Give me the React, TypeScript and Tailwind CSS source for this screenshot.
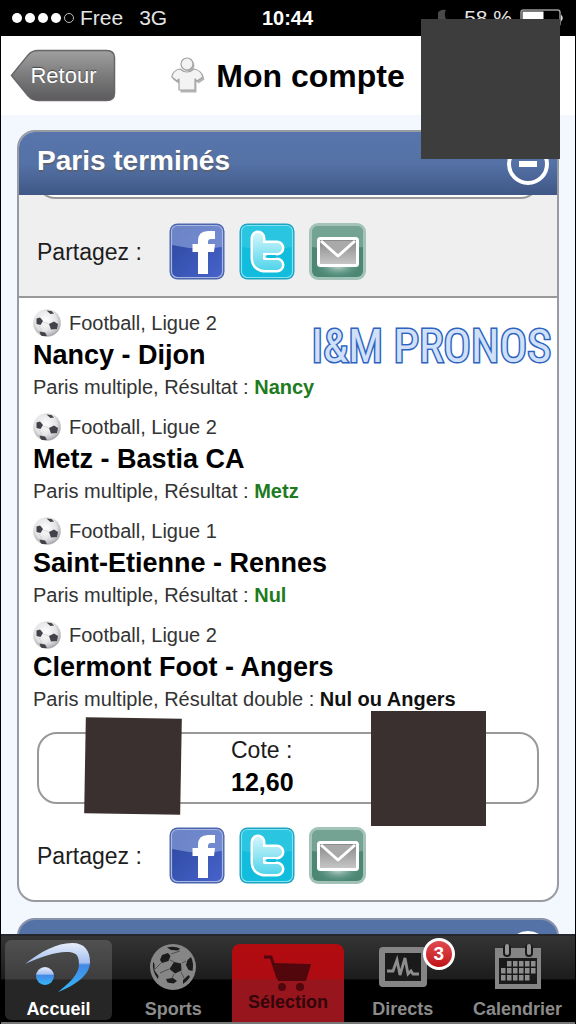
import type { ReactNode } from "react";

type Bet = { league: string; match: string; label: string; result: string; won: boolean };

const bets: Bet[] = [
  { league: "Football, Ligue 2", match: "Nancy - Dijon", label: "Paris multiple, Résultat :", result: "Nancy", won: true },
  { league: "Football, Ligue 2", match: "Metz - Bastia CA", label: "Paris multiple, Résultat :", result: "Metz", won: true },
  { league: "Football, Ligue 1", match: "Saint-Etienne - Rennes", label: "Paris multiple, Résultat :", result: "Nul", won: true },
  { league: "Football, Ligue 2", match: "Clermont Foot - Angers", label: "Paris multiple, Résultat double :", result: "Nul ou Angers", won: false },
];

function StatusBar() {
  return (
    <div className="grid h-9 shrink-0 grid-cols-[1fr_auto_1fr] items-center bg-black pr-3 pl-[11px] text-[21px] text-[#e4e4e4]">
      <div className="flex items-center">
        <div className="mr-[6px] flex gap-[3px]">
          <span className="size-[10px] rounded-full bg-white" />
          <span className="size-[10px] rounded-full bg-white" />
          <span className="size-[10px] rounded-full bg-white" />
          <span className="size-[10px] rounded-full bg-white" />
          <span className="size-[10px] rounded-full border border-[#bdbdbd]" />
        </div>
        <span className="mr-4">Free</span>
        <span>3G</span>
      </div>
      <span className="text-[20px] font-bold text-white">10:44</span>
      <div className="flex items-center justify-end">
        <svg viewBox="0 0 14 18" className="mr-3 h-[18px] w-[14px]" aria-hidden="true">
          <path d="M8 1 A8.500 8.500 0 1 0 13 14 A9 9 0 0 1 8 1Z" fill="#4a4a4a" />
        </svg>
        <span className="mr-2 whitespace-nowrap">58 %</span>
        <svg viewBox="0 0 43 18" className="h-[18px] w-[43px]" aria-hidden="true">
          <rect x="1" y="1" width="39" height="16" rx="2.500" fill="none" stroke="#9a9a9a" strokeWidth="1.500" />
          <rect x="2.500" y="2.500" width="21" height="13" fill="#fff" />
          <path d="M41 5.500 Q44.500 9 41 12.500Z" fill="#ddd" />
        </svg>
      </div>
    </div>
  );
}

function ShirtIcon() {
  return (
    <svg viewBox="0 0 34 38" className="h-[38px] w-[34px]" aria-hidden="true">
      <g transform="translate(1.500 1.500)" fill="#b5b5b5">
        <circle cx="16" cy="7" r="6" />
        <path d="M9 12 Q16 18 23 12 Q30 13 32 21 L26 25 L24 23 V34 H8 V23 L6 25 L0.500 21 Q2 13 9 12Z" />
      </g>
      <g fill="#f3f3f3" stroke="#a2a2a2" strokeWidth="1.200" strokeLinejoin="round">
        <path d="M9 12 Q16 18 23 12 Q30 13 32 20 L26 24 L24 22 V33 H8 V22 L6 24 L0.800 20 Q2 13 9 12Z" />
        <circle cx="16" cy="7" r="6" />
      </g>
    </svg>
  );
}

function Header() {
  return (
    <header className="grid h-[79px] shrink-0 grid-cols-[1fr_auto_1fr] items-center bg-white px-2">
      <button className="relative isolate h-[53px] w-[107px] pl-[2px] text-[22px] text-white [text-shadow:0_-1px_1px_#444]">
        <svg viewBox="0 0 108 54" className="absolute inset-0 -z-10 size-full" aria-hidden="true">
          <defs>
            <linearGradient id="back" x1="0" y1="0" x2="0" y2="1">
              <stop offset="0" stopColor="#a0a0a0" />
              <stop offset="0.500" stopColor="#7b7b7b" />
              <stop offset="1" stopColor="#5c5a5d" />
            </linearGradient>
          </defs>
          <path d="M2 27 L19 6 Q23 1.500 29 1.500 H99 Q107 1.500 107 9 V45 Q107 52.500 99 52.500 H29 Q23 52.500 19 48Z" fill="url(#back)" stroke="#67656a" strokeWidth="1.500" />
        </svg>
        Retour
      </button>
      <div className="flex items-center gap-[11px]">
        <ShirtIcon />
        <h1 className="text-[32px] font-bold text-black">Mon compte</h1>
      </div>
      <span />
    </header>
  );
}

function FacebookIcon() {
  return (
    <svg viewBox="0 0 56 57" className="h-[57px] w-[56px]" aria-hidden="true">
      <defs>
        <linearGradient id="fb" x1="0" y1="0" x2="1" y2="1">
          <stop offset="0" stopColor="#2c479c" />
          <stop offset="1" stopColor="#4763cb" />
        </linearGradient>
      </defs>
      <rect x="0.500" y="0.500" width="55" height="56" rx="8" fill="#4a66ae" />
      <rect x="2.500" y="2.500" width="51" height="52" rx="6" fill="url(#fb)" stroke="#a9b7e0" strokeWidth="1.200" />
      <path d="M3 22 V8 Q3 3 8 3 H48 Q53 3 53 8 V24 Q28 28 3 22Z" fill="#8fa5dc" opacity="0.650" />
      <path d="M29 51 V29 H23.500 V21 H29 V18 Q29 8 39 8 H46 V16 H42 Q39 16 39 19 V21 H46 L45 29 H39 V51Z" fill="#fff" />
    </svg>
  );
}

function TwitterIcon() {
  return (
    <svg viewBox="0 0 56 57" className="h-[57px] w-[56px]" aria-hidden="true">
      <defs>
        <linearGradient id="tw" gradientUnits="userSpaceOnUse" x1="0" y1="8" x2="0" y2="48">
          <stop offset="0" stopColor="#d8f8fc" />
          <stop offset="1" stopColor="#4fd3ea" />
        </linearGradient>
      </defs>
      <rect x="0.500" y="0.500" width="55" height="56" rx="8" fill="#1ca4c4" />
      <rect x="2.500" y="2.500" width="51" height="52" rx="6" fill="#12bcdc" stroke="#83e2f2" strokeWidth="1.200" />
      <path d="M3 24 V8 Q3 3 8 3 H48 Q53 3 53 8 V24 Q28 28 3 24Z" fill="#3bcbe4" opacity="0.600" />
      <g fill="none" strokeLinecap="round" strokeLinejoin="round">
        <path d="M19 15 V35 Q19 42 27 42 H38 M19 25 H38" stroke="#fff" strokeWidth="15" />
        <path d="M19 15 V35 Q19 42 27 42 H38 M19 25 H38" stroke="url(#tw)" strokeWidth="10" />
      </g>
      <path d="M28 33.500 H37" stroke="#12bcdc" strokeWidth="3" />
    </svg>
  );
}

function MailIcon() {
  return (
    <svg viewBox="0 0 57 57" className="size-[57px]" aria-hidden="true">
      <defs>
        <radialGradient id="glow">
          <stop offset="0" stopColor="#d5e6e0" />
          <stop offset="1" stopColor="#4c8b7a" stopOpacity="0" />
        </radialGradient>
        <linearGradient id="env" x1="0" y1="0" x2="0" y2="1">
          <stop offset="0" stopColor="#858585" />
          <stop offset="1" stopColor="#c9c9c9" />
        </linearGradient>
      </defs>
      <rect width="57" height="57" rx="9" fill="#a3c2b8" />
      <rect x="3" y="3" width="51" height="51" rx="6" fill="#4c8774" />
      <path d="M3 24 V9 Q3 3 9 3 H48 Q54 3 54 9 V24 Q28 28 3 24Z" fill="#8fb5a8" opacity="0.600" />
      <ellipse cx="29" cy="42" rx="24" ry="14" fill="url(#glow)" />
      <rect x="9.500" y="15.500" width="39" height="27" rx="2" fill="url(#env)" stroke="#fff" strokeWidth="3" />
      <path d="M12 18 L29 33 L46 18" fill="#a9a9a9" stroke="#fff" strokeWidth="3" strokeLinejoin="round" />
    </svg>
  );
}

function Share() {
  return (
    <div className="flex items-center pl-[18px]">
      <span className="w-[132px] pt-[2px] text-[23px] text-[#1d1d1d]">Partagez :</span>
      <div className="flex gap-[14px]">
        <button aria-label="Facebook"><FacebookIcon /></button>
        <button aria-label="Twitter"><TwitterIcon /></button>
        <button aria-label="E-mail"><MailIcon /></button>
      </div>
    </div>
  );
}

function BallIcon() {
  return (
    <svg viewBox="0 0 28 28" className="size-7" aria-hidden="true">
      <defs>
        <radialGradient id="ball" cx="0.450" cy="0.400" r="0.650">
          <stop offset="0" stopColor="#ffffff" />
          <stop offset="0.600" stopColor="#e4e4e6" />
          <stop offset="1" stopColor="#9a9a9e" />
        </radialGradient>
        <clipPath id="ballclip"><circle cx="14" cy="14" r="13.800" /></clipPath>
      </defs>
      <circle cx="14" cy="14" r="13.800" fill="url(#ball)" />
      <g clipPath="url(#ballclip)">
        <path d="M10 13 L16 15 M6 17 L9 22 M18 20 L14 23" stroke="#cfcfd3" strokeWidth="0.800" />
        <g fill="#41424a">
          <path d="M16 15 L21 12.500 L25 15 L24 20 L18 20.500Z" />
          <path d="M3.500 9.500 L7 8.500 L10 12 L7.500 16 L3.500 15Z" />
          <path d="M13.500 1.500 L18.500 2 L21 4.500 L17.500 5Z" />
          <path d="M6.500 22.500 L12 23.500 L14 27 L8 27Z" />
        </g>
      </g>
    </svg>
  );
}

function BetRow({ bet }: { bet: Bet }) {
  return (
    <li>
      <div className="flex h-7 items-center gap-2 text-[20px] text-[#333]">
        <BallIcon />
        <span>{bet.league}</span>
      </div>
      <h3 className="text-[27px] leading-9 font-bold text-black">{bet.match}</h3>
      <p className="text-[20px] leading-7 text-[#333]">
        {bet.label}{" "}
        <strong className={bet.won ? "text-[#1e7b1e]" : "text-[#111]"}>{bet.result}</strong>
      </p>
    </li>
  );
}

function Panel() {
  return (
    <section className="overflow-hidden rounded-[18px] border-2 border-[#999ba3] bg-white">
      <div className="flex h-[63px] items-center justify-between bg-linear-to-b from-[#5875ac] via-[#5572a6] to-[#3f5786] pr-2 pl-[18px]">
        <h2 className="pb-[5px] text-[28px] font-bold text-white [text-shadow:0_2px_1px_#5b6270]">Paris terminés</h2>
        <button aria-label="Replier" className="flex size-[42px] items-center justify-center rounded-full border-4 border-white">
          <span className="h-[6px] w-[18px] bg-white" />
        </button>
      </div>
      <div className="border-b-2 border-[#999] bg-[#efefef] pb-4">
        <div className="flex h-1 items-end overflow-hidden px-[18px]">
          <div className="h-[72px] w-full shrink-0 rounded-[18px] border-2 border-[#999] bg-white" />
        </div>
        <div className="pt-6"><Share /></div>
      </div>
      <div className="relative pt-[11px] pb-4">
        <ul className="flex flex-col gap-3 px-[14px]">
          {bets.map((bet) => <BetRow key={bet.match} bet={bet} />)}
        </ul>
        <p className="absolute top-5 right-[6px] font-['Liberation_Sans_Narrow','Roboto_Condensed','Open_Sans_Condensed','Liberation_Sans',sans-serif] text-[46px] leading-[56px] whitespace-nowrap text-[#cfe0f8] [paint-order:stroke_fill] [-webkit-text-stroke:3px_#2d62c0]">
          I&amp;M PRONOS
        </p>
        <div className="relative mx-[18px] mt-[19px] mb-[23px] grid h-[72px] grid-cols-3 rounded-[20px] border-2 border-[#999]">
          <div className="absolute -top-4 left-[46px] size-24 rotate-1 bg-[#39302f]" />
          <div className="col-start-2 pl-[26px] text-[#1b1b1b]">
            <p className="text-[23px] leading-8">Cote :</p>
            <p className="text-[25px] leading-8 font-bold text-black">12,60</p>
          </div>
          <div className="absolute -top-[23px] right-[51px] size-[115px] bg-[#39302f]" />
        </div>
        <Share />
      </div>
    </section>
  );
}

function HomeIcon() {
  return (
    <svg viewBox="0 0 66 50" className="h-[50px] w-[66px]" aria-hidden="true">
      <defs>
        <linearGradient id="swoosh" x1="0" y1="0" x2="0" y2="1">
          <stop offset="0" stopColor="#e8eefb" />
          <stop offset="0.400" stopColor="#a4bff0" />
          <stop offset="0.450" stopColor="#4288e4" />
          <stop offset="1" stopColor="#35b8fb" />
        </linearGradient>
      </defs>
      <path d="M0 21 C15 9 32 0 47 0 C60 0 65 8 65 19 C65 32 51 42 33 49 C43 41 54 32 54 21 C54 11 50 9 41 9 C30 9 15 14 0 21Z" fill="url(#swoosh)" />
      <circle cx="20" cy="33" r="9" fill="url(#swoosh)" />
    </svg>
  );
}

function SportsIcon() {
  return (
    <svg viewBox="0 0 48 48" className="size-12" aria-hidden="true">
      <circle cx="24" cy="24" r="23" fill="#868686" />
      <g stroke="#4a4a4a" strokeWidth="0.900" fill="none">
        <path d="M21 17 L25 19 M33 20 L37 18 M25 31 L23 35 M12 20 L6 26 M11 30 L20 26 M32 29 L35 35 M22 11 L31 8" />
      </g>
      <g fill="#1b1b1b">
        <path d="M25 19 L32 20.500 L32.500 27.500 L26 30.500 L20.500 26Z" />
        <path d="M13 12 L19 10 L21.500 13 L19.500 18 L13 20 L11 17Z" />
        <path d="M18 4.500 Q25 2.500 31 5.500 L29 7.500 L22 7Z" />
        <path d="M38.500 17 L42 14 Q45 20 43.500 28 L39.500 27 L37 22Z" />
        <path d="M17 36 L24 35 L28 38 L24.500 40.500 L18.500 39.500Z" />
        <path d="M34 37 L39.500 32 L41 34 Q38.500 38 34 41Z" />
        <path d="M4 19 L5.500 21 L5.500 27.500 L9.500 33 L9 36 Q3 29 4 19Z" />
      </g>
    </svg>
  );
}

function CartIcon() {
  return (
    <svg viewBox="0 0 52 38" className="h-[38px] w-[52px]" aria-hidden="true">
      <path d="M2 3 H9 L16 24" fill="none" stroke="#51070c" strokeWidth="3" />
      <path d="M10 9 L49 10 L44 27 H16Z" fill="#51070c" />
      <circle cx="20" cy="33" r="4" fill="#51070c" />
      <circle cx="38" cy="33" r="4" fill="#51070c" />
    </svg>
  );
}

function LiveIcon() {
  return (
    <svg viewBox="0 0 48 42" className="h-[42px] w-[48px]" aria-hidden="true">
      <rect y="1" width="48" height="40" rx="4" fill="#858585" />
      <rect x="6" y="7" width="36" height="28" fill="#1a1a1a" />
      <path d="M8 25 H14 L18 14 L21 29 L26 12 L29 28 L32 25 L34 28 H40" fill="none" stroke="#8d8d8d" strokeWidth="2.800" />
    </svg>
  );
}

function CalendarIcon() {
  const cells = [
    [14, 18], [20, 18], [26, 18], [32, 18], [38, 18],
    [8, 25], [14, 25], [20, 25], [26, 25], [32, 25], [38, 25],
    [8, 32], [14, 32], [20, 32], [26, 32], [32, 32],
  ];
  return (
    <svg viewBox="0 0 48 46" className="h-[46px] w-[48px]" aria-hidden="true">
      <rect x="1" y="4" width="46" height="41" fill="#858585" />
      <rect x="5" y="14" width="38" height="26" fill="#1a1a1a" />
      <g fill="#8d8d8d">
        {cells.map(([x, y]) => <rect key={x + "-" + y} x={x - 1} y={y - 1} width="4.500" height="5.500" />)}
      </g>
      <rect x="9" y="0" width="8" height="13" rx="4" fill="#1a1a1a" />
      <rect x="31" y="0" width="8" height="13" rx="4" fill="#1a1a1a" />
      <rect x="11" y="0" width="4" height="11" rx="2" fill="#949494" />
      <rect x="33" y="0" width="4" height="11" rx="2" fill="#949494" />
    </svg>
  );
}

function Tab({ label, children }: { label: string; children: ReactNode }) {
  return (
    <a href="#" className="flex flex-col items-center justify-between pt-[6px] pb-[3px] text-[18px] leading-5 font-bold text-[#8b8b8b]">
      <span className="relative flex h-[50px] items-center">{children}</span>
      {label}
    </a>
  );
}

function TabBar() {
  return (
    <nav className="grid h-[90px] shrink-0 grid-cols-5 border-t-2 border-b-2 border-t-[#26272c] border-b-[#777] bg-[linear-gradient(#343434,#1c1c1c_50%,#000_51%)]">
      <a href="#" className="mx-1 mt-1 mb-[2px] flex flex-col items-center justify-between rounded-md bg-white/15 pt-[3px] pb-px text-[18px] leading-5 font-bold text-white">
        <HomeIcon />
        Accueil
      </a>
      <Tab label="Sports"><SportsIcon /></Tab>
      <a href="#" className="mx-px mt-2 flex flex-col items-center rounded-t-lg bg-[linear-gradient(#b30b10,#ad0c12_45%,#97151d_46%)] pt-[10px] text-[18px] leading-5 font-bold text-[#32060a]">
        <CartIcon />
        Sélection
      </a>
      <Tab label="Directs">
        <LiveIcon />
        <span className="absolute -top-1 -right-7 flex size-8 items-center justify-center rounded-full border-3 border-white bg-linear-to-b from-[#e04a50] to-[#c20a14] text-[19px] text-white">3</span>
      </Tab>
      <Tab label="Calendrier"><CalendarIcon /></Tab>
    </nav>
  );
}

export default function App() {
  return (
    <div className="relative flex h-dvh flex-col overflow-hidden border-x border-black bg-[#f3f7fe] font-['Liberation_Sans',Arial,sans-serif]">
      <StatusBar />
      <Header />
      <main className="flex min-h-0 flex-1 flex-col gap-4 overflow-hidden px-4 pt-[15px] *:shrink-0">
        <Panel />
        <section className="overflow-hidden rounded-t-[18px] border-2 border-[#8792ab] bg-[#5572a6]">
          <div className="flex h-[63px] items-center justify-end pr-2">
            <button aria-label="Déplier" className="flex size-[42px] items-center justify-center rounded-full border-4 border-white">
              <span className="h-[6px] w-[18px] bg-white" />
            </button>
          </div>
        </section>
      </main>
      <TabBar />
      <div className="absolute top-[19px] right-[15px] h-[140px] w-[139px] bg-[#3e3d3e]" />
    </div>
  );
}
